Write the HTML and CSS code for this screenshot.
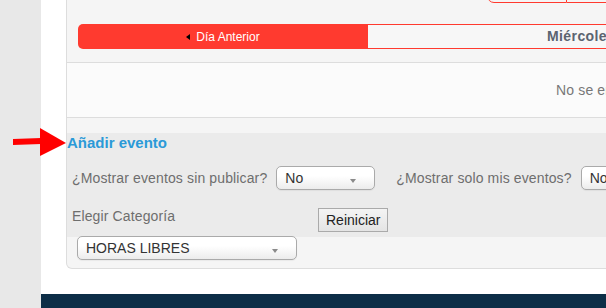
FILE: index.html
```html
<!DOCTYPE html>
<html>
<head>
    <meta charset="UTF-8">
    <meta name="viewport" content="width=device-width, initial-scale=1.0">
    <title>Eventos</title>
    <link rel="stylesheet" href="styles.css">
</head>
<body>
    <div class="page">
        <div class="gutter"></div>
        <div class="main">
            <div class="content">
                <div class="panel">
                    <div class="panel-head">
                        <div class="views">
                            <div class="view first"></div>
                            <div class="view"></div>
                        </div>
                        <div class="daybar">
                            <div class="prev"><span class="tri-left"></span>Día Anterior</div>
                            <div class="today">Miércoles 14 de Marzo de 2018</div>
                        </div>
                    </div>
                    <div class="empty">No se encontraron eventos</div>
                    <div class="spacer"></div>
                    <div class="filters">
                        <a class="add-link" href="#">Añadir evento</a>
                        <div class="row mid">
                            <span class="lbl">¿Mostrar eventos sin publicar?</span>
                            <div class="fake-select small"><span>No</span><span class="caret"></span></div>
                            <span class="lbl second">¿Mostrar solo mis eventos?</span>
                            <div class="fake-select small"><span>No</span><span class="caret"></span></div>
                        </div>
                        <div class="row">
                            <span class="lbl cat">Elegir Categoría</span>
                            <button class="reset">Reiniciar</button>
                        </div>
                    </div>
                    <div class="cat-box">
                        <div class="fake-select wide"><span>HORAS LIBRES</span><span class="caret"></span></div>
                    </div>
                </div>
            </div>
            <div class="footer"></div>
        </div>
    </div>

    <!-- annotation arrow -->
    <svg class="pointer" width="70" height="40" viewBox="0 0 70 40">
        <polygon points="13,14 41,13 41,19 13,20" fill="#ff0000"/>
        <polygon points="40,3 66,18 40,31" fill="#ff0000"/>
    </svg>
</body>
</html>
```

FILE: styles.css
```css
body {
    margin: 0;
    background-color: #e8e8e8;
    font-family: "Liberation Sans", Arial, sans-serif;
    font-size: 14px;
    overflow: hidden;
}

.page {
    display: flex;
    height: 100vh;
}

.gutter {
    width: 41px;
    flex-shrink: 0;
}

.main {
    flex: 1;
    min-width: 0;
    background-color: white;
    display: flex;
    flex-direction: column;
}

.content {
    padding-left: 25px;
    padding-bottom: 25px;
}

.panel {
    width: 700px;
    border: 1px solid #dddddd;
    border-top: none;
    border-radius: 0 0 6px 6px;
    background-color: #f5f5f5;
}

.panel-head {
    display: flow-root;
    background-color: #f5f5f5;
    padding: 0 0 13px 11px;
    border-bottom: 1px solid #dddddd;
}

.views {
    display: flex;
    margin: -22px 0 21px 409px;
    height: 25px;
}

.view {
    width: 120px;
    border: 1px solid #ff3a2f;
    border-left: none;
}

.view.first {
    width: 78px;
    border-left: 1px solid #ff3a2f;
    border-radius: 0 0 0 7px;
}

.daybar {
    display: flex;
    height: 25px;
}

.prev {
    width: 290px;
    background-color: #ff3a2f;
    border-radius: 5px 0 0 5px;
    color: white;
    font-size: 12px;
    display: flex;
    align-items: center;
    justify-content: center;
}

.tri-left {
    width: 0;
    height: 0;
    border-top: 3px solid transparent;
    border-bottom: 3px solid transparent;
    border-right: 4px solid black;
    margin-right: 6px;
}

.today {
    flex: 1;
    border: 1px solid #ff3a2f;
    border-left: none;
    background-color: #f7f7f7;
    color: #5b6470;
    font-weight: bold;
    font-size: 14px;
    letter-spacing: 0.4px;
    line-height: 23px;
    padding-left: 179px;
    white-space: nowrap;
    overflow: hidden;
}

.empty {
    height: 54px;
    line-height: 54px;
    background-color: #fbfbfb;
    border-bottom: 1px solid #dddddd;
    padding-left: 489px;
    color: #777777;
    letter-spacing: 0.15px;
    white-space: nowrap;
}

.spacer {
    height: 15px;
    background-color: #f5f5f5;
}

.filters {
    background-color: #ebebeb;
    height: 104px;
    box-sizing: border-box;
}

.add-link {
    display: block;
    color: #2a9ad8;
    font-weight: bold;
    font-size: 15px;
    line-height: 20px;
    text-decoration: none;
}

.row {
    display: flex;
    align-items: flex-start;
    padding-left: 5px;
    margin-top: 18px;
}

.row.mid {
    align-items: center;
    margin-top: 13px;
}

.lbl {
    color: #6e6e6e;
    line-height: 16px;
    letter-spacing: 0.13px;
    white-space: nowrap;
    margin-right: 9px;
}

.lbl.second {
    margin-left: 21px;
}

.lbl.cat {
    width: 246px;
    margin-right: 0;
}

.fake-select {
    display: flex;
    align-items: center;
    justify-content: space-between;
    height: 22px;
    border: 1px solid #aaaaaa;
    border-radius: 5px;
    background: linear-gradient(#ffffff 40%, #ececec);
    padding: 0 18px 0 8px;
    color: #333333;
    box-shadow: 0 1px 1px rgba(0, 0, 0, 0.05);
}

.fake-select.small {
    width: 71px;
}

.fake-select.wide {
    width: 192px;
}

.caret {
    width: 0;
    height: 0;
    margin-top: 5px;
    border-left: 3.5px solid transparent;
    border-right: 3.5px solid transparent;
    border-top: 4px solid #8a8a8a;
}

.reset {
    height: 24px;
    padding: 0 7px;
    border: 1px solid #aaaaaa;
    background: linear-gradient(#f4f4f4, #e4e4e4);
    font-family: "Liberation Sans", Arial, sans-serif;
    font-size: 14px;
    color: #222222;
}

.cat-box {
    padding: 0 0 8px 10px;
    border-radius: 0 0 6px 6px;
}

.cat-box .fake-select {
    margin-top: -1px;
}

.footer {
    flex: 1;
    background-color: #0d2e47;
}

.pointer {
    position: absolute;
    left: 0;
    top: 125px;
}
```
